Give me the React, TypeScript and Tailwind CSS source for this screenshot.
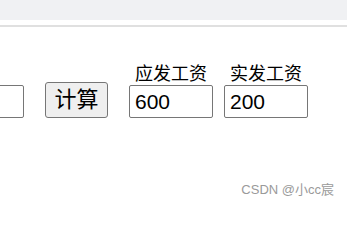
export default function App() {
  const cjk = "font-['Liberation_Sans','Noto_Sans_CJK_SC',sans-serif]";

  return (
    <div className={`relative h-[207px] w-[347px] overflow-hidden bg-white ${cjk}`}>
      <div className="h-[20px] bg-[#f0f1f3]" />
      <div className="mt-[5px] h-[2px] bg-[#e0e0e0]" />

      <div className="mt-[38px] flex items-end">
        <input
          readOnly
          value=""
          className="ml-[-60px] h-[33px] w-[84px] rounded-[2px] border border-[#767676] bg-white"
        />
        <button className="ml-[21px] h-[36px] w-[63px] rounded-[3px] border border-[#767676] bg-[#efefef] text-[22px] leading-none text-black">
          计算
        </button>
        <div className="ml-[21px] flex w-[84px] flex-col items-center">
          <span className="mb-[2px] text-[18px] leading-[18px] text-black">应发工资</span>
          <input
            readOnly
            value="600"
            className="h-[33px] w-[84px] rounded-[2px] border border-[#767676] bg-white px-[5px] text-[21px] text-black outline-none"
          />
        </div>
        <div className="ml-[11px] flex w-[84px] flex-col items-center">
          <span className="mb-[2px] text-[18px] leading-[18px] text-black">实发工资</span>
          <input
            readOnly
            value="200"
            className="h-[33px] w-[84px] rounded-[2px] border border-[#767676] bg-white px-[5px] text-[21px] text-black outline-none"
          />
        </div>
      </div>

      <div className="absolute right-[13px] top-[183px] text-[13px] leading-[14px] text-[#9a9a9a]">
        CSDN @小cc宸
      </div>
    </div>
  );
}
